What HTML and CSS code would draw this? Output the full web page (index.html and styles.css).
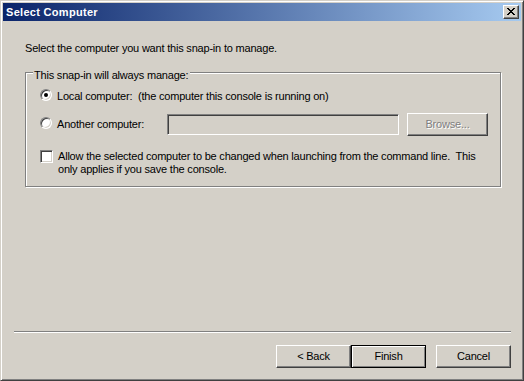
FILE: index.html
```html
<!DOCTYPE html>
<html>
<head>
<meta charset="utf-8">
<title>Select Computer</title>
<link rel="stylesheet" href="styles.css">
</head>
<body>
<div class="window">
  <div class="titlebar">
    <span class="title">Select Computer</span>
    <span class="close-btn">
      <svg width="8" height="7" viewBox="0 0 8 7" shape-rendering="crispEdges"><path d="M0 0h2v1H0zM6 0h2v1H6zM1 1h2v1H1zM5 1h2v1H5zM2 2h4v1H2zM3 3h2v1H3zM2 4h4v1H2zM1 5h2v1H1zM5 5h2v1H5zM0 6h2v1H0zM6 6h2v1H6z" fill="#000"/></svg>
    </span>
  </div>
  <div class="content">
    <p class="intro">Select the computer you want this snap-in to manage.</p>
    <div class="group">
      <span class="legend">This snap-in will always manage:</span>
      <div class="row row-local">
        <span class="radio checked"></span>
        <span class="label">Local computer:  (the computer this console is running on)</span>
      </div>
      <div class="row row-another">
        <span class="radio"></span>
        <span class="label label-another">Another computer:</span>
        <span class="field"></span>
        <span class="btn btn-browse disabled">Browse...</span>
      </div>
      <div class="row row-check">
        <span class="checkbox"></span>
        <span class="label label-check">Allow the selected computer to be changed when launching from the command line.  This
only applies if you save the console.</span>
      </div>
    </div>
    <div class="separator"></div>
    <div class="buttons">
      <span class="btn">&lt; Back</span>
      <span class="btn btn-default">Finish</span>
      <span class="btn btn-cancel">Cancel</span>
    </div>
  </div>
</div>
</body>
</html>
```
FILE: styles.css
```css
html, body {
  margin: 0;
  padding: 0;
  background: #d4d0c8;
}
body {
  font-family: "Liberation Sans", Arial, sans-serif;
  font-size: 11px;
  line-height: 13px;
  color: #000;
  letter-spacing: -0.2px;
}
.window {
  width: 524px;
  height: 381px;
  box-sizing: border-box;
  border: 1px solid;
  border-color: #d4d0c8 #404040 #404040 #d4d0c8;
  box-shadow: inset 1px 1px #fff, inset -1px -1px #808080;
  padding: 2px;
  background: #d4d0c8;
  display: flex;
  flex-direction: column;
}
.titlebar {
  height: 18px;
  flex: none;
  display: flex;
  align-items: center;
  justify-content: space-between;
  padding: 0 2px 0 3px;
  background: linear-gradient(to right, #0a246a, #a6caf0);
}
.title {
  color: #fff;
  font-weight: bold;
  letter-spacing: 0.3px;
  white-space: nowrap;
}
.close-btn {
  width: 16px;
  height: 14px;
  box-sizing: border-box;
  border: 1px solid;
  border-color: #fff #404040 #404040 #fff;
  box-shadow: inset -1px -1px #808080;
  background: #d4d0c8;
  display: flex;
  align-items: center;
  justify-content: center;
  padding-bottom: 1px;
}
.close-btn svg {
  display: block;
}
.content {
  flex: 1;
  display: flex;
  flex-direction: column;
  padding: 21px 0 10px 0;
}
.intro {
  margin: 0 0 0 22px;
  white-space: pre;
}
.group {
  position: relative;
  margin: 17px 0 0 22px;
  width: 476px;
  height: 115px;
  box-sizing: border-box;
  border: 1px solid #808080;
  box-shadow: inset 1px 1px #fff, 1px 1px #fff;
  padding: 16px 0 0 14px;
}
.legend {
  position: absolute;
  top: -4px;
  left: 7px;
  padding: 0 2px 0 1px;
  background: #d4d0c8;
  white-space: pre;
}
.row {
  display: flex;
  align-items: flex-start;
}
.label {
  white-space: pre;
}
.row-local .label {
  margin: 1px 0 0 5px;
}
.row-another {
  margin-top: 10px;
}
.row-another .radio {
  margin-top: 4px;
}
.label-another {
  margin: 5px 0 0 5px;
  width: 110px;
  flex: none;
}
.field {
  margin-top: 1px;
  width: 232px;
  height: 21px;
  box-sizing: border-box;
  border: 1px solid;
  border-color: #808080 #fff #fff #808080;
  box-shadow: inset 1px 1px #404040, inset -1px -1px #d4d0c8;
  background: #d4d0c8;
  flex: none;
}
.row-check {
  margin-top: 14px;
}
.label-check {
  margin-left: 5px;
}
.radio {
  position: relative;
  flex: none;
  width: 12px;
  height: 12px;
  box-sizing: border-box;
  border-radius: 50%;
  border: 1px solid;
  border-color: #808080 #fff #fff #808080;
  box-shadow: inset 1px 1px #404040, inset -1px -1px #d4d0c8;
  background: #fff;
}
.radio.checked::after {
  content: "";
  position: absolute;
  left: 3px;
  top: 3px;
  width: 4px;
  height: 4px;
  border-radius: 50%;
  background: #000;
}
.checkbox {
  flex: none;
  width: 13px;
  height: 13px;
  box-sizing: border-box;
  border: 1px solid;
  border-color: #808080 #fff #fff #808080;
  box-shadow: inset 1px 1px #404040, inset -1px -1px #d4d0c8;
  background: #fff;
}
.btn {
  flex: none;
  width: 75px;
  height: 23px;
  box-sizing: border-box;
  border: 1px solid;
  border-color: #fff #404040 #404040 #fff;
  box-shadow: inset -1px -1px #808080;
  background: #d4d0c8;
  display: flex;
  align-items: center;
  justify-content: center;
  white-space: pre;
}
.btn-browse {
  width: 81px;
  margin-left: 8px;
}
.btn.disabled {
  color: #808080;
  text-shadow: 1px 1px #fff;
}
.btn-default {
  border-color: #000;
  box-shadow: inset 1px 1px #fff, inset -1px -1px #808080;
}
.btn-cancel {
  margin-left: 10px;
}
.separator {
  margin: auto 10px 0 11px;
  height: 1px;
  border-top: 1px solid #808080;
  border-bottom: 1px solid #fff;
  height: 0;
}
.buttons {
  display: flex;
  justify-content: flex-end;
  margin: 12px 10px 0 0;
}
```
